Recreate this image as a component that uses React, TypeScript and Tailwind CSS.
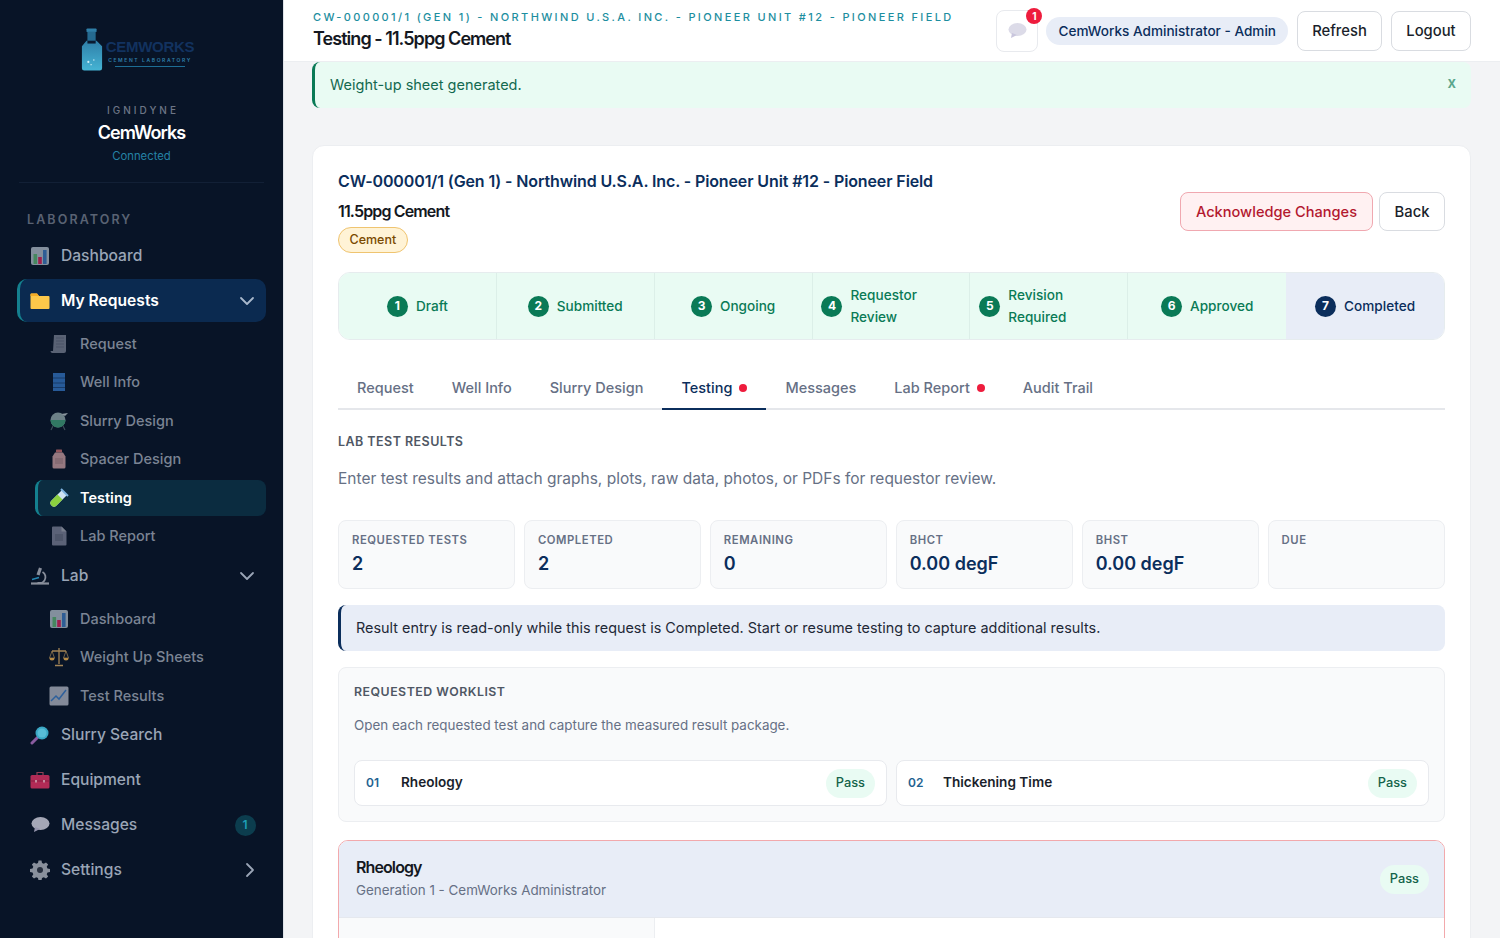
import React from "react";
import { ChevronDown, ChevronRight } from "lucide-react";

const Bars = ({ s = 20 }: { s?: number }) => (
  <svg width={s} height={s} viewBox="0 0 20 20" className="opacity-70">
    <rect x="1" y="1" width="18" height="18" rx="2" fill="#b8c4d0" />
    <rect x="3.500" y="8" width="3.600" height="10" fill="#5fb878" />
    <rect x="8.200" y="11" width="3.600" height="7" fill="#e0245e" />
    <rect x="13" y="4" width="3.600" height="14" fill="#3f7cc4" />
  </svg>
);
const Folder = () => (
  <svg width="20" height="20" viewBox="0 0 20 20">
    <path d="M0.500 3.500a1 1 0 0 1 1-1h5.500l2 2.500h9.500a1 1 0 0 1 1 1V17a1 1 0 0 1-1 1h-17a1 1 0 0 1-1-1z" fill="#fdc84a" />
    <path d="M0.500 3.500a1 1 0 0 1 1-1h5.500l2 2.500h-8.500z" fill="#f5ac26" />
  </svg>
);
const Scroll = () => (
  <svg width="18" height="20" viewBox="0 0 18 20" className="opacity-60">
    <path d="M4 1h12v16a2 2 0 0 1-2 2H2a2 2 0 0 1-1.500-2H3z" fill="#8f96a8" />
    <path d="M6 4h8M6 7h8M6 10h8M6 13h8" stroke="#777e90" strokeWidth="1" />
  </svg>
);
const Book = () => (
  <svg width="18" height="20" viewBox="0 0 18 20" className="opacity-80">
    <rect x="3" y="1" width="12" height="18" fill="#2f6cb5" />
    <path d="M3 6h12M3 11h12M3 15.500h12" stroke="#1d4478" strokeWidth="1" />
  </svg>
);
const Flask = () => (
  <svg width="20" height="20" viewBox="0 0 20 20" className="opacity-75">
    <circle cx="9" cy="9" r="7.500" fill="#8fa6a8" />
    <path d="M1.500 9h15a7.500 7.500 0 0 1-15 0z" fill="#3f9a78" />
    <path d="M12 3l7-1-3 3z" fill="#b6c2c6" />
    <path d="M4 15l-2 4M14 15l2 4" stroke="#50606a" strokeWidth="1.200" />
  </svg>
);
const Jar = () => (
  <svg width="16" height="20" viewBox="0 0 16 20" className="opacity-75">
    <rect x="5" y="0.500" width="6" height="3" rx="0.500" fill="#c06c70" />
    <path d="M4 3.500h8l2.500 4V18a1.500 1.500 0 0 1-1.500 1.500H3A1.500 1.500 0 0 1 1.500 18V7.500z" fill="#c49a9e" />
    <rect x="4" y="9" width="8" height="6" fill="#b08a8e" />
  </svg>
);
const Tube = () => (
  <svg width="20" height="20" viewBox="0 0 20 20">
    <path d="M13 2l5 5-10.500 10.500a3.500 3.500 0 0 1-5-5z" fill="#cfe3f2" />
    <path d="M8.500 6.500l5 5-6 6a3.500 3.500 0 0 1-5-5z" fill="#8bd13f" />
    <path d="M12 1l7 7" stroke="#7fb4e0" strokeWidth="2" />
  </svg>
);
const Page = () => (
  <svg width="16" height="20" viewBox="0 0 16 20" className="opacity-60">
    <path d="M1 1.500A1 1 0 0 1 2 .5h8.500L15.500 5.500V18.500a1 1 0 0 1-1 1H2a1 1 0 0 1-1-1z" fill="#9296ac" />
    <path d="M10.500 .5v5h5z" fill="#c3c6d2" />
    <rect x="4" y="8" width="8" height="7" fill="#7e8298" />
  </svg>
);
const Microscope = () => (
  <svg width="20" height="20" viewBox="0 0 20 20" className="opacity-80">
    <path d="M1 17.500h18" stroke="#a8adb8" strokeWidth="2.200" />
    <path d="M9 1.500l3 1-2.500 7-3-1z" fill="#a8adb8" />
    <path d="M12.500 6a6 6 0 0 1 2 8.500c-.8 1.200-2 2-3 2.500h-4" fill="none" stroke="#a8adb8" strokeWidth="1.800" />
    <path d="M2 13.500l7-2" stroke="#2da4d6" strokeWidth="1.500" />
  </svg>
);
const Scale = () => (
  <svg width="20" height="20" viewBox="0 0 20 20" className="opacity-80">
    <path d="M10 1v16M3 4h14M6 18.500h8" stroke="#c9a062" strokeWidth="1.300" />
    <path d="M3 4L.5 11h5zM17 4l-2.500 7h5z" fill="none" stroke="#c9a062" strokeWidth=".7" />
    <path d="M.5 11h5a2.500 2.500 0 0 1-5 0zM14.500 11h5a2.500 2.500 0 0 1-5 0z" fill="#e2a94e" />
  </svg>
);
const Trend = () => (
  <svg width="20" height="20" viewBox="0 0 20 20" className="opacity-70">
    <rect x=".5" y=".5" width="19" height="19" rx="1.500" fill="#b7bdca" />
    <path d="M2 15l5-5 3 3 7-9" fill="none" stroke="#3f80cc" strokeWidth="1.500" />
  </svg>
);
const Search = () => (
  <svg width="20" height="20" viewBox="0 0 20 20">
    <path d="M8 12l-6 6" stroke="#8a5ca0" strokeWidth="3" strokeLinecap="round" />
    <circle cx="12" cy="8" r="6.500" fill="#3aa7c4" />
    <circle cx="12" cy="8" r="4.500" fill="#58bdd6" />
  </svg>
);
const Toolbox = () => (
  <svg width="20" height="18" viewBox="0 0 20 18" className="opacity-85">
    <path d="M7 4V1.500h6V4" fill="none" stroke="#a8485f" strokeWidth="1.200" />
    <rect x=".5" y="4" width="19" height="13.500" rx="1.500" fill="#d0305f" />
    <path d="M.5 10h19" stroke="#a02048" strokeWidth="1" />
    <rect x="5" y="9" width="2" height="2.500" fill="#e8a0b4" />
    <rect x="13" y="9" width="2" height="2.500" fill="#e8a0b4" />
  </svg>
);
const Bubble = ({ o = "opacity-75" }: { o?: string }) => (
  <svg width="20" height="18" viewBox="0 0 20 18" className={o}>
    <ellipse cx="10.500" cy="7.500" rx="9" ry="6.500" fill="#d9d8e6" />
    <path d="M5 11l-1 5 6-3z" fill="#c4c0da" />
  </svg>
);
const Gear = () => (
  <svg width="20" height="20" viewBox="0 0 20 20" className="opacity-80">
    <path d="M8.500 0.500h3l.5 2.500 1.800.8 2.200-1.400 2.100 2.100-1.400 2.200.8 1.800 2.500.5v3l-2.500.5-.8 1.800 1.400 2.200-2.100 2.100-2.200-1.400-1.800.8-.5 2.500h-3l-.5-2.500-1.800-.8-2.200 1.400-2.100-2.100 1.400-2.200-.8-1.800-2.500-.5v-3l2.500-.5.8-1.800-1.400-2.200 2.100-2.100 2.200 1.400 1.800-.8z" fill="#aab0ba" />
    <circle cx="10" cy="10" r="3" fill="#2f3644" />
  </svg>
);

const Top = ({ icon, label, right, active }: { icon: React.ReactNode; label: string; right?: React.ReactNode; active?: boolean }) => (
  <div className={`flex h-[43px] items-center rounded-[10px] mb-[2px] pl-[10px] pr-[7px] border-l-[3px] ${active ? "bg-[#0b2a50] border-[#14808f] font-semibold text-white" : "text-[#9aa5b6] font-medium border-transparent"}`}>
    <span className="w-[20px] h-[20px] flex items-center justify-center shrink-0">{icon}</span>
    <span className="ml-[11px] text-[15.600px] flex-1">{label}</span>
    {right}
  </div>
);
const Sub = ({ icon, label, active }: { icon: React.ReactNode; label: string; active?: boolean }) => (
  <div className={`flex h-[36px] items-center rounded-[8px] mb-[2.500px] last:mb-0 ml-[18px] pl-[11px] border-l-[3px] ${active ? "bg-[#0b2c40] border-[#14808f] font-semibold text-white" : "border-transparent font-medium text-[#7b8494]"}`}>
    <span className="w-[20px] h-[20px] flex items-center justify-center shrink-0">{icon}</span>
    <span className="ml-[11px] text-[14.500px]">{label}</span>
  </div>
);

const Sidebar = () => (
  <aside className="w-[284px] shrink-0 h-full bg-[#081427] border-r border-[#dfe3e8] flex flex-col px-[17px]">
    <div className="flex flex-col items-center pt-[25px]">
      <div className="flex items-center h-[48px] -ml-[8px]">
        <svg width="22" height="47" viewBox="0 0 24 47">
          <defs>
            <linearGradient id="bot" x1="0" y1="0" x2="0" y2="1">
              <stop offset="0" stopColor="#2f7fa8" />
              <stop offset="1" stopColor="#45b4d4" />
            </linearGradient>
          </defs>
          <rect x="6" y="0.500" width="11" height="4" rx="1" fill="#2f7fa8" />
          <rect x="7" y="4" width="9" height="10" fill="#256a90" />
          <path d="M6 14h11l6 6v24a2.500 2.500 0 0 1-2.500 2.500h-17A2.500 2.500 0 0 1 1 44V20z" fill="url(#bot)" />
          <rect x="7" y="14" width="9" height="3" fill="#0a1a30" />
          <circle cx="8" cy="37" r="1.200" fill="#cdeef7" />
          <circle cx="14" cy="35" r="0.800" fill="#cdeef7" />
          <circle cx="11" cy="40" r="0.800" fill="#cdeef7" />
        </svg>
        <div className="ml-[3px] mt-[6px] flex flex-col items-center">
          <div className="text-[15px] leading-[18px] font-bold tracking-[-0.3px] text-[#12325f]" style={{ fontFamily: "Liberation Sans, sans-serif" }}>CEMWORKS</div>
          <div className="text-[5px] leading-[7px] tracking-[1.600px] text-[#2f7fa8] font-semibold mt-[1px]">CEMENT LABORATORY</div>
          <div className="h-[1px] w-[70px] bg-[#1d6d94] mt-[2px]" />
        </div>
      </div>
      <div className="mt-[31px] text-[10px] leading-[13px] tracking-[3px] text-[#6d7686] font-medium pl-[3px]">IGNIDYNE</div>
      <div className="mt-[4px] text-[18px] leading-[24px] font-semibold tracking-[-0.95px] text-white">CemWorks</div>
      <div className="mt-[3px] text-[11.300px] leading-[16px] text-[#2582a5]">Connected</div>
    </div>
    <div className="h-[1px] bg-[#122036] mt-[18px] mx-[2px]" />
    <div className="mt-[30px] mb-[7px] pl-[10px] text-[12.500px] leading-[14px] tracking-[2.100px] font-semibold text-[#596273]">LABORATORY</div>
    <nav>
      <Top icon={<Bars />} label="Dashboard" />
      <Top icon={<Folder />} label="My Requests" active right={<ChevronDown size={24} strokeWidth={1.800} className="text-[#a9b8cc]" />} />
      <div className="pt-[1.500px]">
        <Sub icon={<Scroll />} label="Request" />
        <Sub icon={<Book />} label="Well Info" />
        <Sub icon={<Flask />} label="Slurry Design" />
        <Sub icon={<Jar />} label="Spacer Design" />
        <Sub icon={<Tube />} label="Testing" active />
        <Sub icon={<Page />} label="Lab Report" />
      </div>
      <Top icon={<Microscope />} label="Lab" right={<ChevronDown size={24} strokeWidth={1.800} className="text-[#9aa5b6]" />} />
      <div className="pt-[1.500px]">
        <Sub icon={<Bars />} label="Dashboard" />
        <Sub icon={<Scale />} label="Weight Up Sheets" />
        <Sub icon={<Trend />} label="Test Results" />
      </div>
      <Top icon={<Search />} label="Slurry Search" />
      <Top icon={<Toolbox />} label="Equipment" />
      <Top
        icon={<Bubble />}
        label="Messages"
        right={<span className="w-[21px] h-[21px] rounded-full bg-[#0c3d4e] text-[#1e9fb8] text-[12px] font-semibold flex items-center justify-center mr-[3.500px]">1</span>}
      />
      <Top icon={<Gear />} label="Settings" right={<ChevronRight size={24} strokeWidth={1.800} className="text-[#9aa5b6] -mr-[3px]" />} />
    </nav>
  </aside>
);

const steps = [
  ["1", "Draft"],
  ["2", "Submitted"],
  ["3", "Ongoing"],
  ["4", "Requestor Review"],
  ["5", "Revision Required"],
  ["6", "Approved"],
  ["7", "Completed"],
];

const Stepper = () => (
  <div className="mt-[19px] grid grid-cols-7 h-[68px] rounded-[12px] overflow-hidden border border-[#e6ecee]">
    {steps.map(([n, t], i) => {
      const last = i === 6;
      return (
        <div key={n} className={`flex items-center justify-center gap-[8px] ${i < 5 ? "border-r border-[#dcefe8]" : ""} ${last ? "bg-[#e8edf7] text-[#0b2e5c]" : "bg-[#e9fbf3] text-[#0a7a56]"}`}>
          <span className={`w-[21px] h-[21px] shrink-0 rounded-full text-white text-[12px] font-bold flex items-center justify-center ${last ? "bg-[#0b2e5c]" : "bg-[#0a7a56]"}`}>{n}</span>
          <span className={`text-[13.600px] leading-[22px] font-medium ${t.includes(" ") ? "w-[110px]" : ""}`}>{t.includes(" ") ? <>{t.split(" ")[0]}<br />{t.split(" ")[1]}</> : t}</span>
        </div>
      );
    })}
  </div>
);

const tabs: [string, boolean][] = [
  ["Request", false],
  ["Well Info", false],
  ["Slurry Design", false],
  ["Testing", true],
  ["Messages", false],
  ["Lab Report", true],
  ["Audit Trail", false],
];

const Tabs = () => (
  <div className="mt-[30px] flex h-[40px] border-b-2 border-[#e5e7eb]">
    {tabs.map(([t, dot]) => {
      const act = t === "Testing";
      return (
        <div key={t} className={`h-[40px] px-[19px] pb-[3px] flex items-center gap-[7px] text-[14.500px] font-medium border-b-2 ${act ? "border-[#0b2e5c] text-[#0b2e5c]" : "border-transparent text-[#667085]"}`}>
          <span>{t}</span>
          {dot && <span className="w-[8px] h-[8px] rounded-full bg-[#ee1c3d]" />}
        </div>
      );
    })}
  </div>
);

const stats = [
  ["REQUESTED TESTS", "2"],
  ["COMPLETED", "2"],
  ["REMAINING", "0"],
  ["BHCT", "0.00 degF"],
  ["BHST", "0.00 degF"],
  ["DUE", ""],
];

const Pass = ({ className = "" }: { className?: string }) => (
  <span className={`h-[29px] px-[10px] rounded-full bg-[#e9fbf3] text-[#14634a] text-[12.800px] font-medium flex items-center ${className}`}>Pass</span>
);

const Work = ({ n, t }: { n: string; t: string }) => (
  <div className="h-[46px] bg-white border border-[#e8eaee] rounded-[8px] flex items-center pl-[11px] pr-[11px]">
    <span className="w-[35px] text-[12px] font-semibold text-[#1f6391]">{n}</span>
    <span className="text-[13.600px] font-semibold text-[#1a1f2b] flex-1 -mt-[1px]">{t}</span>
    <Pass />
  </div>
);

export default function App() {
  return (
    <div className="w-[1500px] h-[938px] overflow-hidden flex bg-[#f3f4f6] text-[#1a1f2b]" style={{ fontFamily: "Inter, sans-serif" }}>
      <Sidebar />
      <main className="flex-1 min-w-0 h-full flex flex-col">
        <header className="h-[62px] shrink-0 bg-white border-b border-[#eceef1] flex items-center pl-[29px] pr-[29px] pt-[1px]">
          <div className="flex-1 min-w-0">
            <div className="text-[11px] leading-[14px] tracking-[2.365px] font-medium text-[#1d8ea0] whitespace-nowrap -mt-[1px]">CW-000001/1 (GEN 1) - NORTHWIND U.S.A. INC. - PIONEER UNIT #12 - PIONEER FIELD</div>
            <div className="mt-[3px] text-[18px] leading-[24px] font-semibold tracking-[-0.95px] text-[#14181f]">Testing - 11.5ppg Cement</div>
          </div>
          <div className="relative w-[42px] h-[42px] bg-white border border-[#e8eaee] rounded-[8px] flex items-center justify-center mr-[8px]">
            <Bubble o="opacity-90" />
            <span className="absolute -top-[3px] -right-[5px] w-[16px] h-[16px] rounded-full bg-[#ee1c3d] text-white text-[10px] font-bold flex items-center justify-center">1</span>
          </div>
          <div className="h-[28px] px-[12px] rounded-full bg-[#e8edf7] text-[#0b2e5c] text-[13.600px] font-medium flex items-center mr-[9px]">CemWorks Administrator - Admin</div>
          <div className="h-[40px] w-[85px] rounded-[8px] border border-[#d9dce1] text-[14.800px] font-medium flex items-center justify-center mr-[9px] pt-[1px]">Refresh</div>
          <div className="h-[40px] w-[80px] rounded-[8px] border border-[#d9dce1] text-[14.800px] font-medium flex items-center justify-center pt-[1px]">Logout</div>
        </header>
        <div className="flex-1 min-h-0 pl-[28px] pr-[29px] overflow-hidden">
          <div className="h-[46px] bg-[#e9fbf3] border-l-[3px] border-[#0a7a56] rounded-[8px] flex items-center justify-between pl-[15px] pr-[15px]">
            <span className="text-[14.500px] text-[#13694f]">Weight-up sheet generated.</span>
            <span className="text-[15px] font-semibold text-[#5aa68c] -mt-[4px]">x</span>
          </div>
          <section className="mt-[37px] bg-white rounded-[12px] border border-[#eceef1] px-[25px] pt-[24px] pb-[24px]">
            <div className="flex justify-between">
              <div>
                <h1 className="text-[16px] leading-[22px] font-semibold tracking-[-0.12px] text-[#0b2e5c]">CW-000001/1 (Gen 1) - Northwind U.S.A. Inc. - Pioneer Unit #12 - Pioneer Field</h1>
                <div className="mt-[8px] text-[16px] leading-[22px] font-semibold tracking-[-0.85px] text-[#14181f]">11.5ppg Cement</div>
                <span className="mt-[5px] inline-flex h-[26px] px-[10.500px] items-center rounded-full bg-[#fff3d6] border border-[#efc470] text-[#7a4a00] text-[12.500px] font-medium">Cement</span>
              </div>
              <div className="flex gap-[6px] mt-[22px]">
                <div className="h-[39px] w-[193px] rounded-[8px] bg-[#fff1f2] border border-[#f0a8b0] text-[#b3182f] text-[14.600px] font-medium flex items-center justify-center pt-[2px]">Acknowledge Changes</div>
                <div className="h-[39px] w-[66px] rounded-[8px] border border-[#d9dce1] text-[14.800px] font-medium flex items-center justify-center pt-[2px]">Back</div>
              </div>
            </div>
            <Stepper />
            <Tabs />
            <div className="mt-[25px] text-[12.500px] leading-[14px] tracking-[0.45px] font-semibold text-[#4f5764]">LAB TEST RESULTS</div>
            <p className="mt-[18px] text-[15.500px] leading-[24px] text-[#667085]">Enter test results and attach graphs, plots, raw data, photos, or PDFs for requestor review.</p>
            <div className="mt-[29px] grid grid-cols-6 gap-[8.500px]">
              {stats.map(([l, v]) => (
                <div key={l} className="h-[69px] rounded-[8px] border border-[#eceef1] bg-[#f9fafb] px-[13px] pt-[12px]">
                  <div className="text-[11.300px] leading-[14px] tracking-[0.55px] font-semibold text-[#667085]">{l}</div>
                  <div className="mt-[4px] text-[18px] leading-[26px] font-semibold text-[#0b2e5c]">{v}</div>
                </div>
              ))}
            </div>
            <div className="mt-[16px] h-[46px] rounded-[8px] bg-[#e8edf7] border-l-[3px] border-[#0b2e5c] flex items-center pl-[15px] text-[14.400px] text-[#1f2937]">Result entry is read-only while this request is Completed. Start or resume testing to capture additional results.</div>
            <div className="mt-[16px] h-[155px] rounded-[8px] border border-[#eceef1] bg-[#f9fafb] px-[15px] pt-[15px]">
              <div className="text-[12.350px] leading-[18px] tracking-[0.5px] font-semibold text-[#4f5764]">REQUESTED WORKLIST</div>
              <p className="mt-[14px] text-[13.400px] leading-[20px] text-[#667085]">Open each requested test and capture the measured result package.</p>
              <div className="mt-[25px] grid grid-cols-2 gap-[9px]">
                <Work n="01" t="Rheology" />
                <Work n="02" t="Thickening Time" />
              </div>
            </div>
            <div className="mt-[18px] rounded-[10px] border border-[#f2a9ac] overflow-hidden">
              <div className="h-[77px] bg-[#e8edf7] border-b border-[#e5e8ee] flex items-center justify-between pl-[17px] pr-[15px]">
                <div className="-mt-[2px]">
                  <div className="text-[16px] leading-[22px] font-semibold tracking-[-0.9px] text-[#14181f]">Rheology</div>
                  <div className="mt-[2px] text-[13.400px] leading-[20px] text-[#667085]">Generation 1 - CemWorks Administrator</div>
                </div>
                <Pass />
              </div>
              <div className="flex h-[200px]">
                <div className="w-[316px] bg-[#f9fafb] border-r border-[#eceef1]" />
                <div className="flex-1" />
              </div>
            </div>
          </section>
        </div>
      </main>
    </div>
  );
}
